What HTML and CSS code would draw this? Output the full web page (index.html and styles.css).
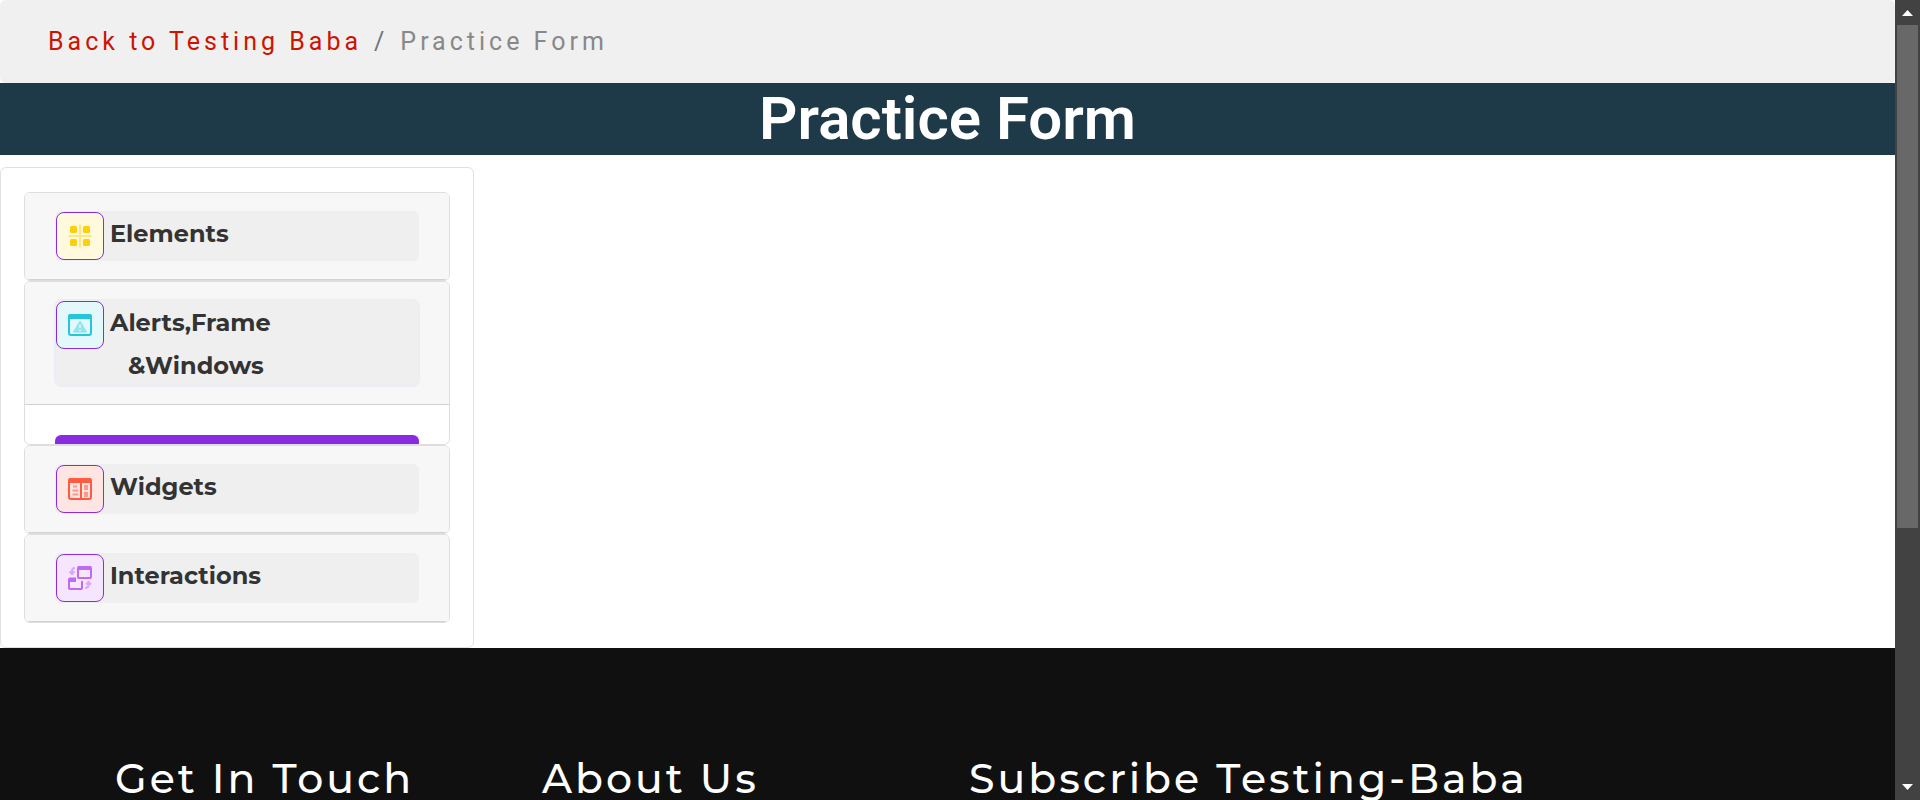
FILE: index.html
```html
<!DOCTYPE html>
<html lang="en">
<head>
<meta charset="utf-8">
<title>Practice Form</title>
<link rel="stylesheet" href="styles.css">
</head>
<body>
<div class="page">
  <nav class="breadcrumb" aria-label="Breadcrumb">
    <a class="crumb-link" href="#">Back to Testing Baba</a>
    <span class="crumb-sep">/</span>
    <span class="crumb-current">Practice Form</span>
  </nav>
  <h1 class="title">Practice Form</h1>

  <main class="content">
    <aside class="sidebar">
      <section class="item">
        <div class="item-header">
          <button class="toggle" type="button">
            <span class="icon icon-yellow">
              <svg viewBox="0 0 24 24" aria-hidden="true">
                <path d="M12 .5v23M.5 12h23" stroke="#ffe680" stroke-width="2"/>
                <g fill="#ffd00a"><rect x="2" y="2" width="7" height="7" rx="1.5"/><rect x="15" y="2" width="7" height="7" rx="1.5"/><rect x="2" y="15" width="7" height="7" rx="1.5"/><rect x="15" y="15" width="7" height="7" rx="1.5"/></g>
              </svg>
            </span>
            <span class="label">Elements</span>
          </button>
        </div>
      </section>
      <section class="item">
        <div class="item-header">
          <button class="toggle toggle-active" type="button" aria-expanded="true">
            <span class="icon icon-cyan">
              <svg viewBox="0 0 24 24" aria-hidden="true">
                <rect x="1" y="2" width="22" height="20" rx="2" fill="#e2f8fb"/>
                <path d="M12 8 18.500 19H5.500Z" fill="#93e3ed" stroke="#93e3ed" stroke-width="1" stroke-linejoin="round"/>
                <path d="M12 11.500v3.500M12 16.500v1.500" stroke="#e2f8fb" stroke-width="1.500"/>
                <rect x="1" y="2" width="22" height="20" rx="2" fill="none" stroke="#26c6da" stroke-width="2"/>
                <path d="M0 6V3.500Q0 1 2.500 1H21.500Q24 1 24 3.500V6Z" fill="#26c6da"/>
              </svg>
            </span>
            <span class="label">Alerts,Frame<span class="label-second">&amp;Windows</span></span>
          </button>
        </div>
        <div class="item-body"><div class="menu"></div></div>
      </section>
      <section class="item">
        <div class="item-header">
          <button class="toggle" type="button">
            <span class="icon icon-red">
              <svg viewBox="0 0 24 24" aria-hidden="true">
                <rect x="1" y="2" width="22" height="20" rx="2" fill="none" stroke="#ff5a42" stroke-width="2"/>
                <path d="M0 6V3.500Q0 1 2.500 1H21.500Q24 1 24 3.500V6Z" fill="#ff5a42"/>
                <path d="M13 6v16" stroke="#ff5a42" stroke-width="2"/>
                <path d="M5 9.500h4M4.500 13.500h6M4.500 17.500h6" stroke="#ff9a8b" stroke-width="1.800"/>
                <path d="M16 8h4v5h-4zM16 15h4v5h-4z" fill="#ff9a8b"/>
              </svg>
            </span>
            <span class="label">Widgets</span>
          </button>
        </div>
      </section>
      <section class="item">
        <div class="item-header">
          <button class="toggle" type="button">
            <span class="icon icon-purple">
              <svg viewBox="0 0 24 24" aria-hidden="true">
                <g fill="none" stroke="#c069f5" stroke-width="2">
                  <rect x="10" y="1" width="13" height="11" rx="1"/>
                  <path d="M8 12.500H2Q1 12.500 1 13.500V22Q1 23 2 23H13Q14 23 14 22V15"/>
                </g>
                <path d="M10 0H23V4H10zM1 12H8V16H1z" fill="#c069f5"/>
                <g fill="none" stroke="#dba6fb" stroke-width="2"><path d="M7 2Q4 2 4 5V8M1.500 5.500 4 8 6.500 5.500"/><path d="M17 22Q20.500 22 20.500 19V16.500M18 18.500 20.500 16 23 18.500"/></g>
              </svg>
            </span>
            <span class="label">Interactions</span>
          </button>
        </div>
      </section>
    </aside>
  </main>

  <footer class="footer">
    <h2 class="footer-title">Get In Touch</h2>
    <h2 class="footer-title">About Us</h2>
    <h2 class="footer-title">Subscribe Testing-Baba</h2>
  </footer>
</div>
<div class="scrollbar" aria-hidden="true">
  <svg class="arrow" viewBox="0 0 25 25"><path d="M12.500 10 18 16H7Z" fill="#fff"/></svg>
  <div class="track"><div class="thumb"></div></div>
  <svg class="arrow" viewBox="0 0 25 25"><path d="M12.500 15 18 9H7Z" fill="#fff"/></svg>
</div>
</body>
</html>
```
FILE: styles.css
```css
* { box-sizing: border-box; }

html { overflow: hidden; }

body {
  margin: 0;
  display: flex;
  height: 100vh;
  overflow: hidden;
  background: #fff;
  font-family: Roboto, "Liberation Sans", sans-serif;
}

.page {
  flex: 1;
  min-width: 0;
  overflow: hidden;
}

.breadcrumb {
  display: flex;
  gap: 12px;
  padding: 24px 48px 23px;
  border-radius: 6px;
  background: #f0f0f0;
  color: #6c757d;
  font-size: 25px;
  line-height: 36px;
  letter-spacing: 4px;
}

.crumb-link {
  color: #cc1500;
  text-decoration: none;
}

.crumb-current { color: #888; }

.title {
  margin: 0;
  background: #1e3948;
  color: #fff;
  font-size: 60px;
  font-weight: 600;
  line-height: 72px;
  text-align: center;
}

.content { padding-top: 12px; }

.sidebar {
  width: 25%;
  padding: 24px 23px;
  border: 1px solid #dfe0e4;
  border-radius: 6px;
}

.item {
  overflow: hidden;
  border: 1px solid #dedede;
  border-radius: 6px;
}

.item-header {
  padding: 18px 30px;
  border-bottom: 1px solid #d2d2d2;
  background: #f7f7f7;
}

.toggle {
  display: flex;
  gap: 6px;
  width: 100%;
  height: 50px;
  padding: 1px;
  border: 0;
  border-radius: 6px;
  background: #efefef;
  color: #333;
  font-family: Montserrat, Inter, sans-serif;
  font-size: 24px;
  font-weight: 700;
  line-height: 43px;
  text-align: left;
}

.toggle-active {
  height: 86px;
  box-shadow: 0 0 0 1px #e9eef6;
}

.icon {
  display: flex;
  flex: none;
  align-items: center;
  justify-content: center;
  width: 48px;
  height: 48px;
  border: 1px solid #8a2be2;
  border-radius: 8px;
}

.icon svg {
  width: 24px;
  height: 24px;
}

.icon-yellow { background: #fff9dd; }
.icon-cyan { background: #e2f8fb; }
.icon-red { background: #ffe5e1; }
.icon-purple { background: #f5e5ff; }

.label-second {
  display: block;
  padding-left: 18px;
}

.item-body {
  height: 39px;
  padding: 30px 30px 0;
}

.menu {
  height: 100%;
  border-radius: 6px 6px 0 0;
  background: #8a2be2;
}

.footer {
  display: grid;
  grid-template-columns: 2fr 2fr 4fr;
  padding: 106px 72px 96px 115px;
  background: #101010;
}

.footer-title {
  margin: 0;
  color: #fff;
  font-family: Montserrat, Inter, sans-serif;
  font-size: 41px;
  font-weight: 500;
  line-height: 48px;
  letter-spacing: 3px;
  white-space: nowrap;
}

.scrollbar {
  display: flex;
  flex-direction: column;
  width: 25px;
  background: #424242;
}

.arrow {
  width: 25px;
  height: 25px;
}

.track {
  flex: 1;
  padding: 0 2px;
}

.thumb {
  height: 67%;
  background: #686868;
}
```
